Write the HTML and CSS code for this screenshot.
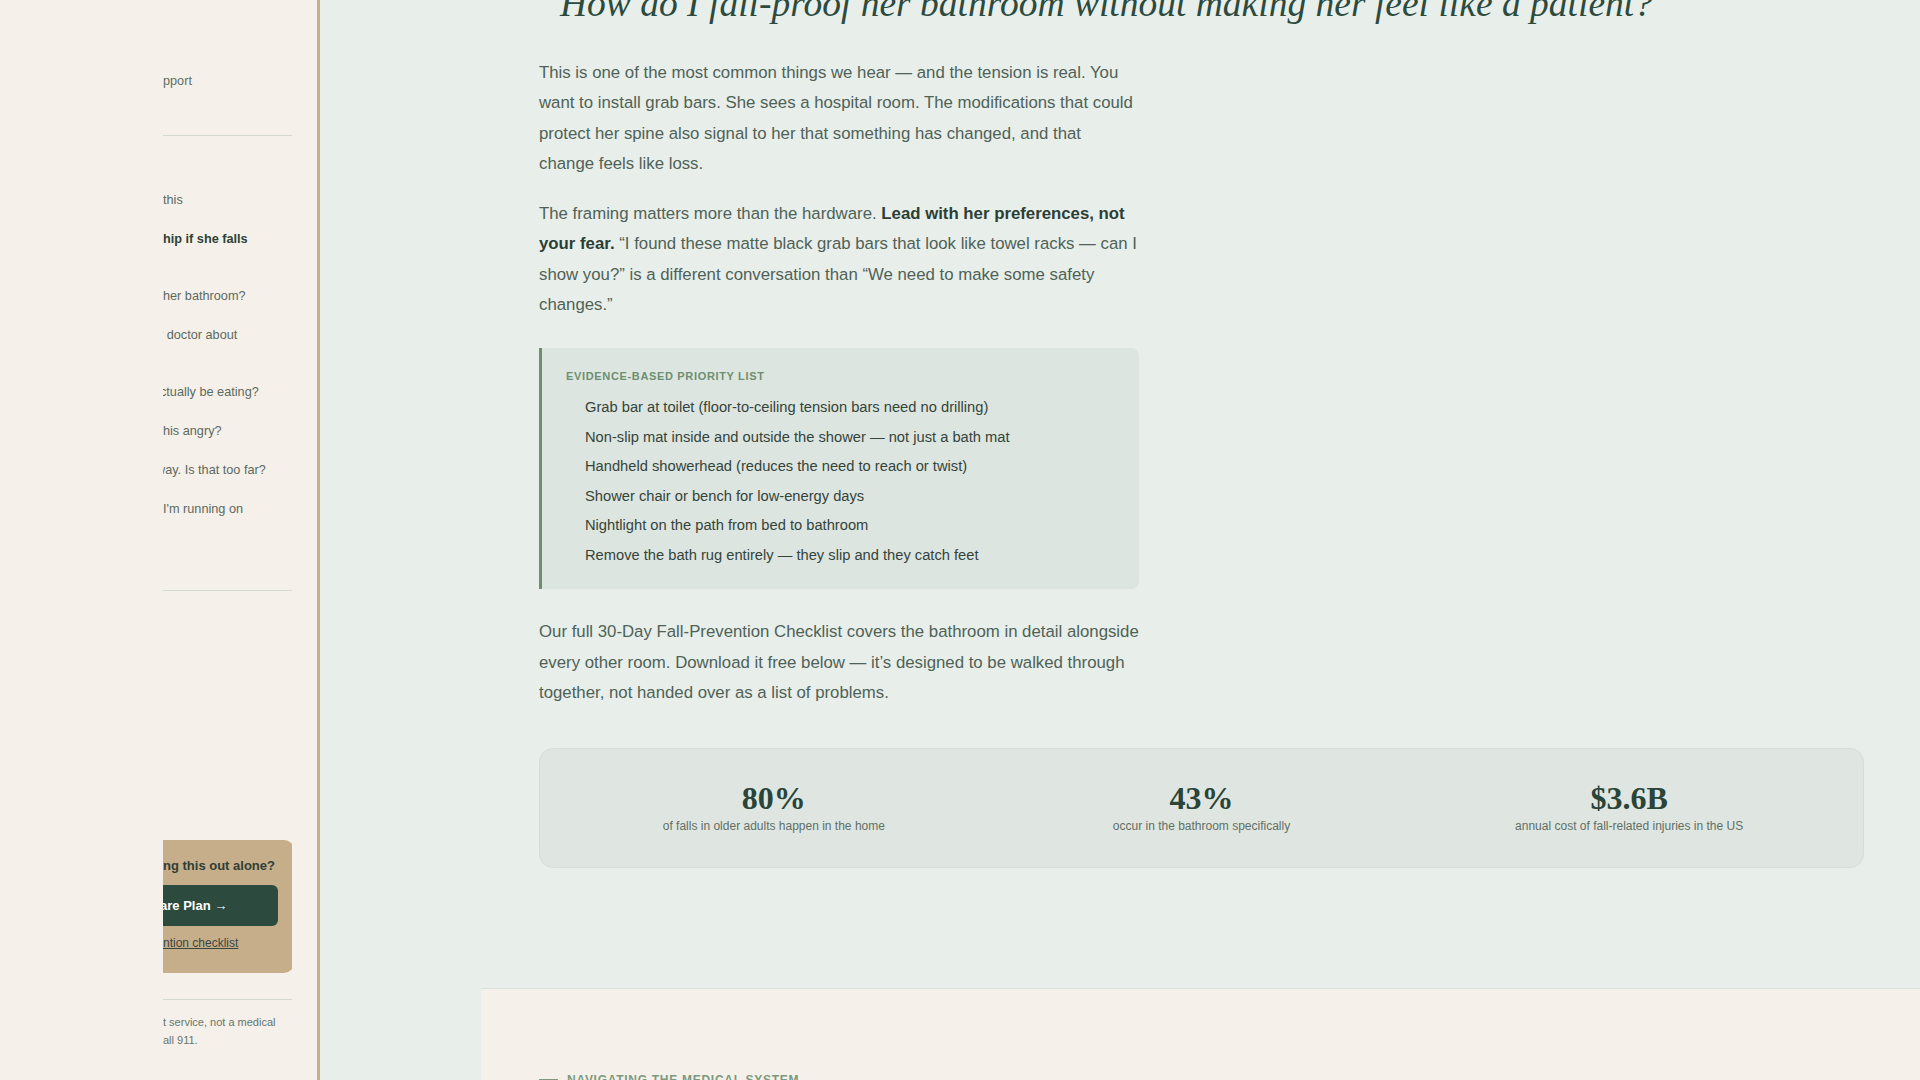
FILE: index.html
```
<!DOCTYPE html>
<html lang="en">
<head>
  <meta charset="UTF-8" />
  <meta name="viewport" content="width=device-width, initial-scale=1" />
  <title>Fall prevention at home</title>
  <link rel="stylesheet" href="styles.css">
</head>
<body>
  <aside class="sidebar">
    <div class="sidebar-inner">
      <p class="tagline">pport</p>
      <hr class="rule" />

      <nav class="toc">
        <ul class="toc-group">
          <li>this</li>
          <li class="active">hip if she falls</li>
        </ul>
        <ul class="toc-group">
          <li>her bathroom?</li>
          <li><span class="cut">r doctor about</span></li>
        </ul>
        <ul class="toc-group">
          <li><span class="cut cut-sm">ctually be eating?</span></li>
          <li>his angry?</li>
          <li><span class="cut cut-lg">way. Is that too far?</span></li>
          <li>I'm running on</li>
        </ul>
      </nav>
      <hr class="rule" />

      <div class="sidebar-bottom">
        <div class="cta">
          <p class="cta-title">ng this out alone?</p>
          <a class="cta-btn" href="#"><span class="cut cut-sm">are Plan →</span></a>
          <a class="cta-link" href="#">ntion checklist</a>
        </div>
        <hr class="rule rule-bottom" />
        <p class="disclaimer">t service, not a medical<br>all 911.</p>
      </div>
    </div>
  </aside>

  <main class="main">
    <article class="article">
      <h2 class="question">How do I fall-proof her bathroom without making her feel like a patient?</h2>

      <div class="prose">
        <p>This is one of the most common things we hear — and the tension is real. You want to install grab bars. She sees a hospital room. The modifications that could protect her spine also signal to her that something has changed, and that change feels like loss.</p>
        <p>The framing matters more than the hardware. <strong>Lead with her preferences, not your fear.</strong> “I found these matte black grab bars that look like towel racks — can I show you?” is a different conversation than “We need to make some safety changes.”</p>

        <div class="callout">
          <div class="callout-label">Evidence-based priority list</div>
          <ul class="callout-list">
            <li>Grab bar at toilet (floor-to-ceiling tension bars need no drilling)</li>
            <li>Non-slip mat inside and outside the shower — not just a bath mat</li>
            <li>Handheld showerhead (reduces the need to reach or twist)</li>
            <li>Shower chair or bench for low-energy days</li>
            <li>Nightlight on the path from bed to bathroom</li>
            <li>Remove the bath rug entirely — they slip and they catch feet</li>
          </ul>
        </div>

        <p>Our full 30-Day Fall-Prevention Checklist covers the bathroom in detail alongside every other room. Download it free below — it’s designed to be walked through together, not handed over as a list of problems.</p>
      </div>

      <div class="stats">
        <div class="stat">
          <div class="stat-num">80%</div>
          <div class="stat-label">of falls in older adults happen in the home</div>
        </div>
        <div class="stat">
          <div class="stat-num">43%</div>
          <div class="stat-label">occur in the bathroom specifically</div>
        </div>
        <div class="stat">
          <div class="stat-num">$3.6B</div>
          <div class="stat-label">annual cost of fall-related injuries in the US</div>
        </div>
      </div>
    </article>

    <section class="next-section">
      <div class="eyebrow">Navigating the medical system</div>
    </section>
  </main>
</body>
</html>
```

FILE: styles.css
```
:root {
  --cream: #f5f0e9;
  --sage-bg: #e8eeea;
  --tan: #c6ae8b;
  --green-dark: #2c4a3e;
  --green-mid: #6d8f71;
  --text: #4f6257;
  --text-muted: #5f6f65;
  --rule: #d4d9d2;
}

* {
  box-sizing: border-box;
}

html, body {
  height: 100%;
}

body {
  margin: 0;
  display: flex;
  overflow: hidden;
  font-family: "Liberation Sans", Arial, sans-serif;
  background: var(--sage-bg);
  color: var(--text);
}

/* ---- sidebar ---- */

.sidebar {
  flex: 0 0 320px;
  height: 100vh;
  background: var(--cream);
  border-right: 3px solid var(--tan);
}

.sidebar-inner {
  margin-left: 163px;
  width: 129px;
  height: 100%;
  overflow: hidden;
  display: flex;
  flex-direction: column;
  padding-top: 71px;
  padding-bottom: 31px;
}

.tagline {
  margin: 0;
  font-size: 12.7px;
  line-height: 20px;
  color: var(--text-muted);
  white-space: nowrap;
}

.rule {
  border: 0;
  border-top: 1px solid var(--rule);
  margin: 44px 0 0;
  flex: 0 0 auto;
}

.toc {
  padding-top: 45px;
}

.toc-group {
  list-style: none;
  margin: 0 0 18px;
  padding: 0;
}

.toc-group li {
  font-size: 12.7px;
  line-height: 19px;
  padding: 10px 0;
  white-space: nowrap;
  color: #5b6a61;
}

.toc-group li.active {
  font-weight: bold;
  color: #2d4237;
}

.toc + .rule {
  margin-top: 43px;
}

.cut {
  display: inline-block;
  margin-left: -4px;
}

.cut-sm {
  margin-left: -3px;
}

.cut-lg {
  margin-left: -7px;
}

.sidebar-bottom {
  margin-top: auto;
}

.cta {
  background: var(--tan);
  border-radius: 10px;
  margin-left: -30px;
  margin-right: -2px;
  padding: 18px 16px 22px 30px;
}

.cta-title {
  margin: 0;
  font-size: 13px;
  line-height: 16px;
  font-weight: bold;
  color: #2f3f35;
  white-space: nowrap;
}

.cta-btn {
  display: block;
  margin: 11px 0 0 -40px;
  padding-left: 40px;
  height: 41px;
  line-height: 41px;
  background: var(--green-dark);
  border-radius: 6px;
  color: #fff;
  font-size: 13px;
  font-weight: bold;
  text-decoration: none;
  white-space: nowrap;
}

.cta-link {
  display: block;
  margin-top: 9px;
  font-size: 12px;
  line-height: 16px;
  color: #3b463e;
  white-space: nowrap;
}

.rule-bottom {
  margin-top: 26px;
}

.disclaimer {
  margin: 13px 0 0;
  font-size: 11px;
  line-height: 18px;
  color: #66766c;
  white-space: nowrap;
}

/* ---- main column ---- */

.main {
  flex: 1;
  height: 100vh;
  overflow: hidden;
}

.article {
  padding: 0 56px 0 219px;
}

.question {
  margin: -18px 0 0 21px;
  font-family: "Liberation Serif", "Times New Roman", serif;
  font-style: italic;
  font-weight: normal;
  font-size: 37.5px;
  line-height: 44px;
  color: var(--green-dark);
  white-space: nowrap;
}

.prose {
  max-width: 600px;
  margin-top: 32px;
}

.prose p {
  margin: 0 0 20px;
  font-size: 16.8px;
  line-height: 30.3px;
}

.prose strong {
  color: #2c3f35;
}

.callout {
  margin: 28px 0 28px;
  background: #dde5e0;
  border-left: 3px solid var(--green-mid);
  border-radius: 0 8px 8px 0;
  padding: 22px 24px 22px 24px;
}

.callout-label {
  font-size: 11px;
  font-weight: bold;
  letter-spacing: 0.06em;
  text-transform: uppercase;
  color: var(--green-mid);
  margin-bottom: 14px;
}

.callout-list {
  list-style: none;
  margin: 0;
  padding-left: 19px;
}

.callout-list li {
  font-size: 14.7px;
  line-height: 23.5px;
  margin-top: 6px;
  color: #34443a;
}

.stats {
  margin-top: 40px;
  display: grid;
  grid-template-columns: repeat(3, 1fr);
  padding: 31px 20px 33px;
  background: #dfe6e1;
  border: 1px solid #d6ddd8;
  border-radius: 14px;
  text-align: center;
}

.stat-num {
  font-family: "Liberation Serif", "Times New Roman", serif;
  font-weight: bold;
  font-size: 32px;
  line-height: 36px;
  color: #2a4438;
}

.stat-label {
  font-size: 12px;
  line-height: 16px;
  margin-top: 2px;
  color: var(--text-muted);
}

/* ---- next section peeking in ---- */

.next-section {
  margin: 120px 0 0 161px;
  min-height: 200px;
  background: var(--cream);
  border-top: 1px solid #dcdfd6;
  padding: 84px 0 0 58px;
}

.eyebrow {
  display: flex;
  align-items: center;
  gap: 9px;
  font-size: 12px;
  font-weight: bold;
  letter-spacing: 0.06em;
  text-transform: uppercase;
  color: #7b9a7f;
}

.eyebrow::before {
  content: "";
  width: 19px;
  border-top: 2px solid #7b9a7f;
}
```
